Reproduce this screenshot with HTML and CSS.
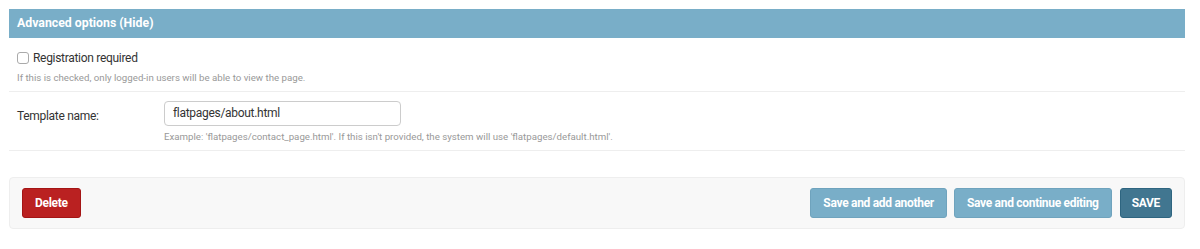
FILE: index.html
```html
<!DOCTYPE html>
<html>
<head>
<meta charset="utf-8">
<link rel="stylesheet" href="styles.css">
</head>
<body>
<div class="page">
  <fieldset class="module">
    <h2 class="module-title">Advanced options (<a class="collapse-toggle">Hide</a>)</h2>
    <div class="form-row">
      <div class="checkbox-row">
        <span class="checkbox"></span>
        <label class="vCheckboxLabel">Registration required</label>
      </div>
      <div class="help">If this is checked, only logged-in users will be able to view the page.</div>
    </div>
    <div class="form-row">
      <div class="field-line">
        <label class="field-label">Template name:</label>
        <div class="field-body">
          <div class="text-input">flatpages/about.html</div>
          <div class="help">Example: 'flatpages/contact_page.html'. If this isn't provided, the system will use 'flatpages/default.html'.</div>
        </div>
      </div>
    </div>
  </fieldset>
  <div class="submit-row">
    <a class="btn btn-delete">Delete</a>
    <div class="spacer"></div>
    <a class="btn btn-light">Save and add another</a>
    <a class="btn btn-light">Save and continue editing</a>
    <a class="btn btn-default">SAVE</a>
  </div>
</div>
</body>
</html>
```

FILE: styles.css
```css
html, body {
  margin: 0;
  padding: 0;
  background: #fff;
  font-family: Roboto, "Liberation Sans", Arial, sans-serif;
  color: #333;
}
.page {
  padding: 9px 15px 0 9px;
}
.module {
  margin: 0;
  padding: 0;
  border: none;
}
.module-title {
  margin: 0;
  height: 29px;
  line-height: 29px;
  background: #79aec8;
  color: #fff;
  font-size: 12.3px;
  font-weight: 700;
  padding: 0 8px;
}
.collapse-toggle {
  color: #fff;
}
.form-row {
  padding: 8px 8px 0 8px;
  border-bottom: 1px solid #eee;
}
.form-row:first-of-type {
  height: 45px;
}
.checkbox-row {
  display: flex;
  align-items: center;
  height: 24px;
}
.checkbox {
  width: 10px;
  height: 10px;
  border: 1px solid #aaa;
  border-radius: 3px;
  margin-right: 4px;
  background: #fff;
}
.vCheckboxLabel {
  font-size: 12px;
  letter-spacing: -0.3px;
  color: #333;
}
.help {
  font-size: 9.7px;
  color: #999;
  margin-top: 2px;
}
.field-line {
  display: flex;
  height: 49px;
  padding-top: 1px;
}
.field-label {
  width: 147px;
  font-size: 12px;
  letter-spacing: -0.3px;
  color: #333;
  padding-top: 8px;
}
.text-input {
  width: 222px;
  height: 23px;
  line-height: 23px;
  border: 1px solid #ccc;
  border-radius: 4px;
  padding: 0 5px 0 8px;
  font-size: 12px;
  letter-spacing: -0.3px;
  color: #333;
}
.field-body .help {
  margin-top: 5px;
}
.submit-row {
  margin-top: 26px;
  display: flex;
  align-items: center;
  gap: 7px;
  height: 50px;
  padding: 0 12px;
  background: #f8f8f8;
  border: 1px solid #eee;
  border-radius: 4px;
}
.spacer {
  flex: 1;
}
.btn {
  display: block;
  height: 28px;
  line-height: 28px;
  padding: 0 12px;
  border-radius: 3px;
  color: #fff;
  font-size: 12px;
  letter-spacing: -0.3px;
  font-weight: 700;
  text-align: center;
}
.btn-delete {
  background: #ba2121;
  border: 1px solid #a41515;
}
.btn-light {
  background: #79aec8;
  border: 1px solid #6fa3bd;
}
.btn-default {
  background: #417690;
  border: 1px solid #2e6580;
  margin-left: 1px;
  padding: 0 11px;
}
```
